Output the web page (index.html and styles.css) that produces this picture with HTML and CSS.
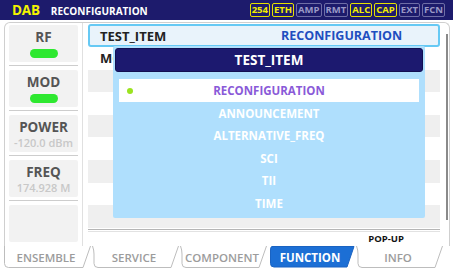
FILE: index.html
```html
<!DOCTYPE html>
<html lang="en">
<head>
  <meta charset="UTF-8" />
  <title>DAB Reconfiguration</title>
  <link rel="stylesheet" href="styles.css">
</head>
<body>
  <div class="topbar">
    <span class="mode">DAB</span>
    <span class="title">RECONFIGURATION</span>
    <div class="badges">
      <span class="badge on">254</span>
      <span class="badge on">ETH</span>
      <span class="badge">AMP</span>
      <span class="badge">RMT</span>
      <span class="badge on">ALC</span>
      <span class="badge on">CAP</span>
      <span class="badge">EXT</span>
      <span class="badge">FCN</span>
    </div>
  </div>

  <div class="frame">
    <div class="side">
      <div class="cell"><div class="label">RF</div><div class="led"></div></div>
      <div class="sep"></div>
      <div class="cell"><div class="label">MOD</div><div class="led"></div></div>
      <div class="sep"></div>
      <div class="cell"><div class="label">POWER</div><div class="sub">-120.0 dBm</div></div>
      <div class="sep"></div>
      <div class="cell"><div class="label">FREQ</div><div class="sub">174.928 M</div></div>
      <div class="sep"></div>
      <div class="cell"></div>
    </div>

    <div class="content">
      <div class="list">
        <div class="row head">
          <span class="key">TEST_ITEM</span>
          <span class="val">RECONFIGURATION</span>
        </div>
        <div class="row"><span class="key">MODE</span></div>
        <div class="row alt"></div>
        <div class="row"></div>
        <div class="row alt"></div>
        <div class="row"></div>
        <div class="row alt"></div>
        <div class="row"></div>
        <div class="row alt"></div>
        <div class="rule"></div>
        <div class="hint">POP-UP</div>
      </div>
      <div class="scroll"></div>

      <!-- popup list over the table -->
      <div class="popup">
        <div class="popup-title">TEST_ITEM</div>
        <ul class="options">
          <li class="picked"><span class="dot"></span>RECONFIGURATION</li>
          <li>ANNOUNCEMENT</li>
          <li>ALTERNATIVE_FREQ</li>
          <li>SCI</li>
          <li>TII</li>
          <li>TIME</li>
        </ul>
      </div>
    </div>
  </div>

  <div class="tabs">
    <div class="tab">
      <svg width="88" height="22"><path d="M1.5 0 V17.5 Q1.5 21.5 5.5 21.5 H80 L87.5 0" /></svg>
      <span>ENSEMBLE</span>
    </div>
    <div class="tab">
      <svg width="88" height="22"><path d="M1.5 0 Q3 4 3 8 V17.5 Q3 21.5 7 21.5 H80 L87.5 0" /></svg>
      <span>SERVICE</span>
    </div>
    <div class="tab">
      <svg width="88" height="22"><path d="M1.5 0 Q3 4 3 8 V17.5 Q3 21.5 7 21.5 H80 L87.5 0" /></svg>
      <span>COMPONENT</span>
    </div>
    <div class="tab active">
      <svg width="88" height="22"><path d="M5 0.5 H87 L80 21 H7 Q3.5 21 3.5 17.5 V4 Q3.5 0.5 5 0.5 Z" /></svg>
      <span>FUNCTION</span>
    </div>
    <div class="tab">
      <svg width="88" height="22"><path d="M1.5 0 Q3 4 3 8 V17.5 Q3 21.5 7 21.5 H80 L87.5 0" /></svg>
      <span>INFO</span>
    </div>
  </div>
</body>
</html>
```

FILE: styles.css
```css
* {
  box-sizing: border-box;
}
body {
  margin: 0;
  width: 453px;
  height: 271px;
  overflow: hidden;
  background: #fff;
  font-family: "Open Sans", sans-serif;
  font-weight: 700;
}

/* top status bar */
.topbar {
  height: 20px;
  background: #1d1b6c;
  display: flex;
  align-items: center;
  padding: 0 8px 0 12px;
}
.mode {
  color: #f3f300;
  font-size: 13.5px;
  letter-spacing: -0.2px;
}
.title {
  color: #fff;
  font-size: 10px;
  margin-left: 11px;
  margin-top: 1px;
}
.badges {
  margin-left: auto;
  display: flex;
  gap: 2px;
}
.badge {
  height: 14px;
  line-height: 12px;
  padding: 0 1px;
  font-size: 9.5px;
  border: 1px solid #6f6ea6;
  border-radius: 2px;
  color: #9a99c6;
}
.badge.on {
  border-color: #e6e000;
  color: #f2ee00;
}

/* main frame */
.frame {
  margin: 2px 3px 0 4px;
  height: 224px;
  border: 1px solid #cfcfcf;
  border-bottom: 0;
  border-radius: 6px 6px 0 0;
  display: flex;
}
.side {
  width: 78px;
  padding: 2px 0 0 4px;
  border-right: 1px solid #e0e0e0;
}
.cell {
  width: 69px;
  height: 37px;
  background: #f2f2f2;
  border-radius: 2px;
  display: flex;
  flex-direction: column;
  align-items: center;
  padding-top: 3px;
}
.sep {
  width: 69px;
  height: 1px;
  background: #cdcdcd;
  margin: 3px 0 4px;
}
.label {
  color: #555;
  font-size: 13.5px;
  line-height: 18px;
}
.led {
  width: 28px;
  height: 9px;
  margin-top: 3px;
  border-radius: 5px;
  background: #2ee830;
}
.sub {
  color: #c8c8c8;
  font-size: 11px;
  font-weight: 600;
  line-height: 14px;
}

.content {
  flex: 1;
  position: relative;
  display: flex;
  padding: 1px 0 0 5px;
}
.list {
  width: 352px;
}
.row {
  height: 22.6px;
  display: flex;
  align-items: center;
  padding-left: 12px;
  font-size: 13px;
  color: #222;
}
.row.alt {
  background: #efefef;
}
.row.head {
  height: 23px;
  background: #e9f3fb;
  border: 2px solid #66c9f4;
  border-radius: 3px;
  padding-left: 10px;
}
.key {
  width: 181px;
}
.val {
  color: #1e4fc0;
  font-size: 12.5px;
}
.rule {
  height: 3px;
  margin-top: 1px;
  border-top: 1px solid #b5b5b5;
  border-bottom: 1px solid #e2e2e2;
}
.hint {
  font-size: 9.5px;
  color: #111;
  text-align: right;
  padding-right: 36px;
  line-height: 13px;
}
.scroll {
  width: 2px;
  height: 186px;
  margin: 10px 0 0 6px;
  background: #8a8a8a;
}

/* popup */
.popup {
  position: absolute;
  left: 30px;
  top: 23px;
  width: 312px;
  height: 172px;
  background: #afdffd;
  border-radius: 2px;
  padding: 2px;
}
.popup-title {
  height: 24px;
  background: #1c196f;
  border: 1px solid #120f52;
  border-radius: 3px;
  color: #fff;
  font-size: 13.5px;
  display: flex;
  align-items: center;
  justify-content: center;
}
.options {
  list-style: none;
  margin: 7px 4px 0;
  padding: 0;
}
.options li {
  height: 22.5px;
  display: flex;
  align-items: center;
  justify-content: center;
  color: #fff;
  font-size: 11.5px;
}
.options li.picked {
  height: 23px;
  background: #fff;
  color: #8a5ad8;
  position: relative;
}
.dot {
  position: absolute;
  left: 8px;
  top: 9px;
  width: 6px;
  height: 6px;
  border-radius: 50%;
  background: #9be31f;
}

/* bottom tabs */
.tabs {
  display: grid;
  grid-template-columns: repeat(5, 88px);
  margin-left: 3px;
}
.tab {
  display: grid;
  height: 22px;
}
.tab svg,
.tab span {
  grid-area: 1 / 1;
}
.tab path {
  fill: #fff;
  stroke: #bdbdbd;
  stroke-width: 1;
}
.tab span {
  display: flex;
  align-items: center;
  justify-content: center;
  padding-right: 2px;
  color: #9c9c9c;
  font-size: 11.5px;
  font-weight: 600;
}
.tab.active path {
  fill: #1c6fd5;
  stroke: #1a63c2;
}
.tab.active span {
  color: #fff;
  font-weight: 700;
}
```
